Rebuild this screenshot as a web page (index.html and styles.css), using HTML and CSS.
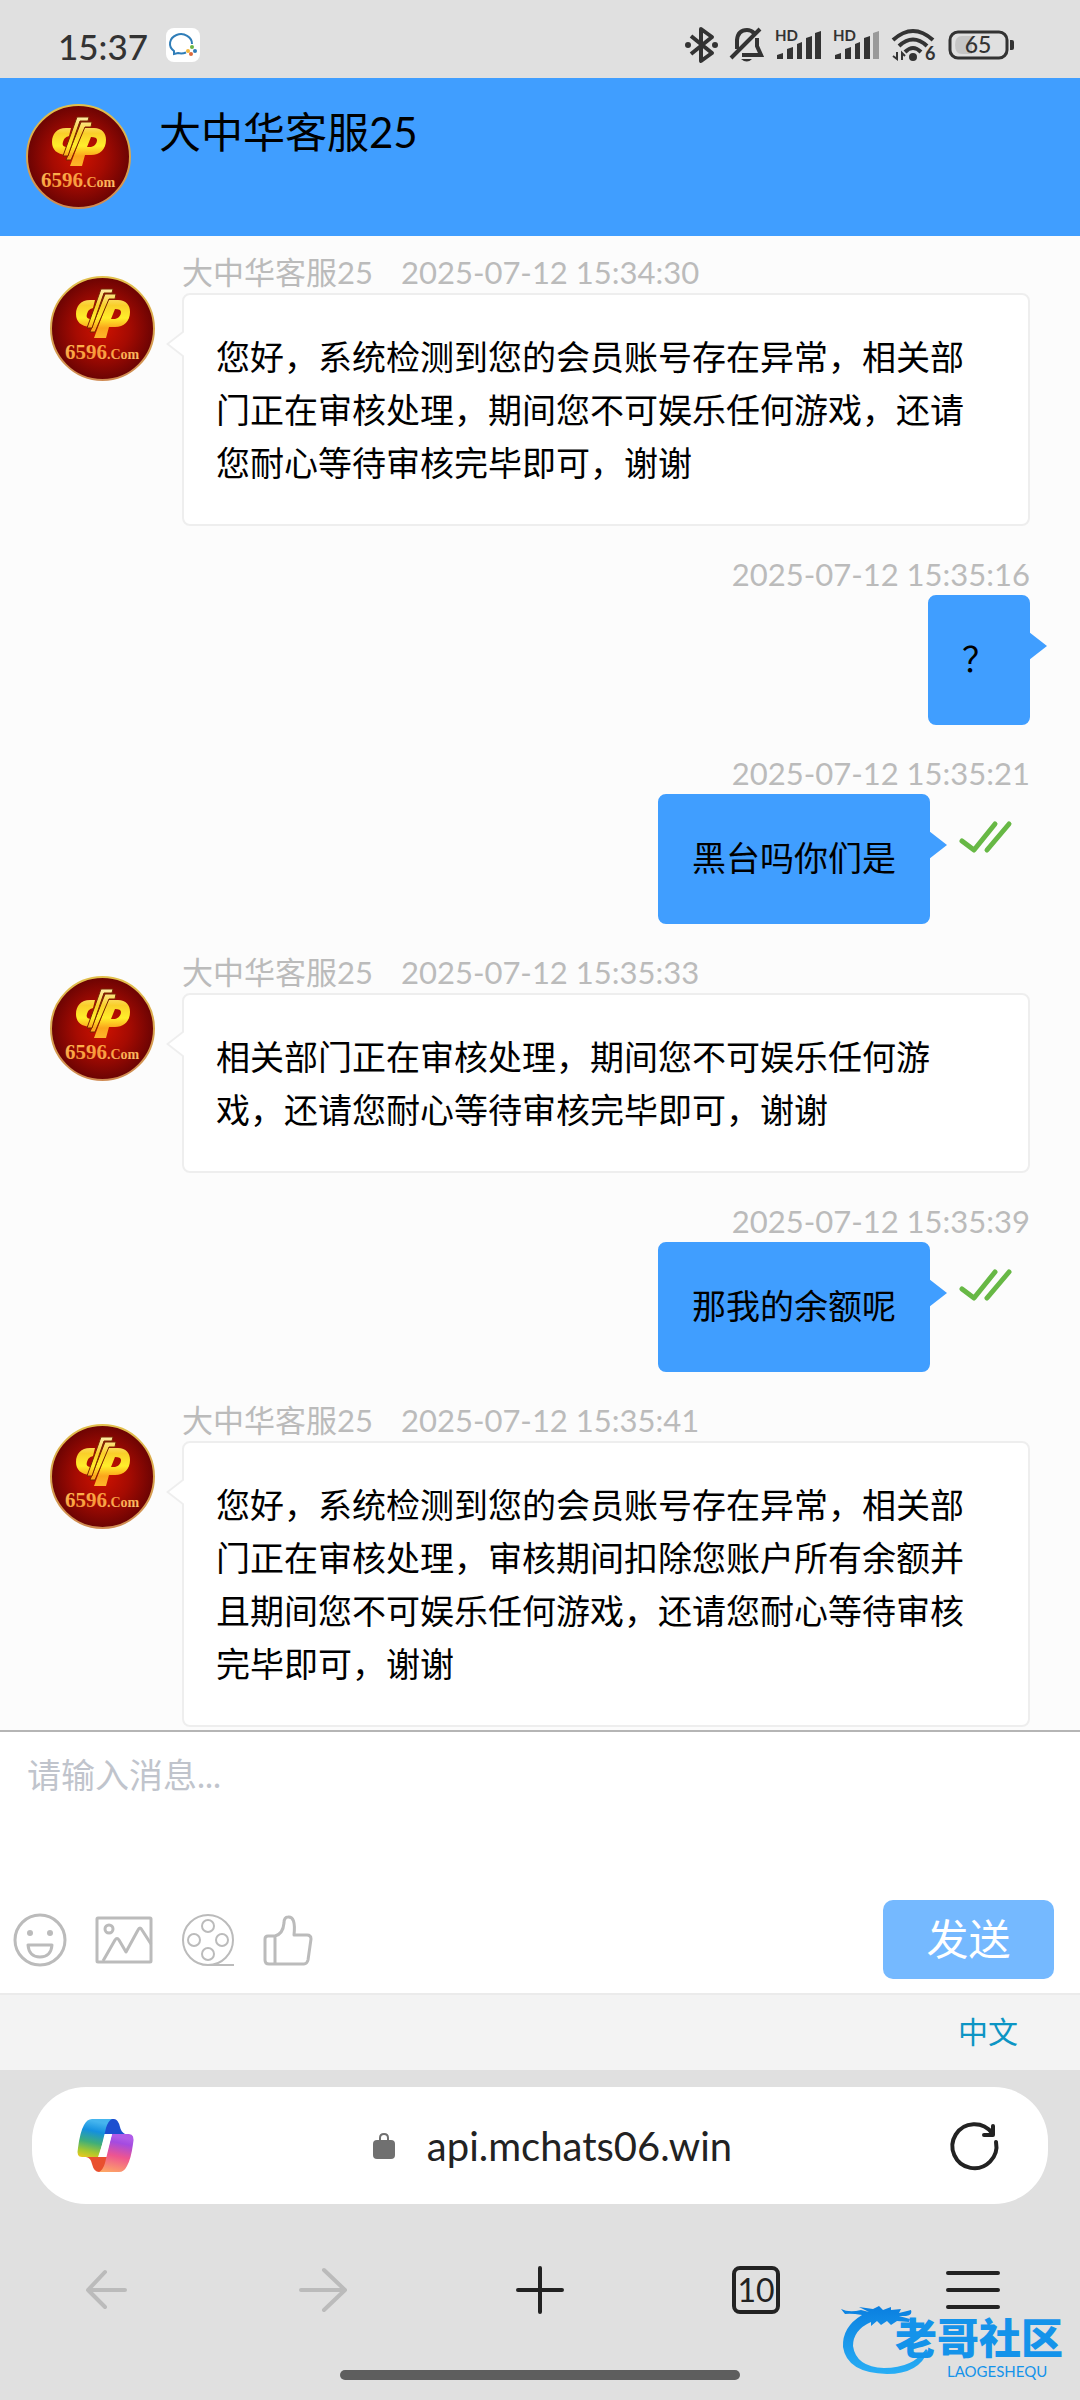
FILE: index.html
```html
<!DOCTYPE html>
<html lang="zh-CN">
<head>
    <meta charset="UTF-8">
    <meta name="viewport" content="width=device-width, initial-scale=1">
    <title>大中华客服25</title>
    <link rel="stylesheet" href="styles.css">
</head>
<body>
    <div class="status_bar">
        <span class="time">15:37</span>
        <svg class="app_badge" width="34" height="34" viewBox="0 0 34 34">
            <rect width="34" height="34" rx="8" fill="#fff"/>
            <path d="M26 16 A11 9.500 0 1 0 8 23 L8 26 L12 25 Q16 26 20 24.500" fill="none" stroke="#2f7db8" stroke-width="2"/>
            <circle cx="22" cy="23" r="2" fill="#f3b53a"/>
            <circle cx="26" cy="19" r="2" fill="#6bb544"/>
            <circle cx="29" cy="23" r="2" fill="#2f7db8"/>
            <circle cx="25" cy="26" r="2" fill="#dd6a3c"/>
        </svg>
        <div class="status_icons">
            <svg width="34" height="36" viewBox="0 0 34 36">
                <path d="M6 9 L27 26 L16 34 V2 L27 10 L6 27" fill="none" stroke="#333" stroke-width="4" stroke-linejoin="round"/>
                <circle cx="3" cy="18" r="3" fill="#333"/>
                <circle cx="30" cy="18" r="3" fill="#333"/>
            </svg>
            <svg width="34" height="36" viewBox="0 0 34 36">
                <path d="M1 31 L30 2 M7 22 V13 Q8 3 17 3 Q21 3 24 6 M27 11 V19 L31 28 H12" fill="none" stroke="#333" stroke-width="4"/>
                <path d="M11 32 H22 Q17 37 11 32 Z" fill="#333"/>
            </svg>
            <svg width="47" height="32" viewBox="0 0 47 32">
                <text x="0" y="12" class="hd" fill="#333">HD</text>
                <path d="M2 26 L8 24 V30 H2 Z M12 20 L18 18 V30 H12 Z M22 15 L27 13 V30 H22 Z M31 9 L37 7 V30 H31 Z M40 4 L46 2 V30 H40 Z" fill="#333"/>
            </svg>
            <svg width="47" height="32" viewBox="0 0 47 32">
                <text x="0" y="12" class="hd" fill="#333">HD</text>
                <path d="M2 26 L8 24 V30 H2 Z M12 20 L18 18 V30 H12 Z M22 15 L27 13 V30 H22 Z M31 9 L37 7 V30 H31 Z" fill="#333"/>
                <path d="M40 4 L46 2 V30 H40 Z" fill="#999"/>
            </svg>
            <svg width="46" height="34" viewBox="0 0 46 34">
                <path d="M2 12 Q22 -6 42 12 M8 18 Q22 5 36 18 M14 24 Q22 16 30 24" fill="none" stroke="#333" stroke-width="4"/>
                <circle cx="22" cy="29" r="4" fill="#333"/>
                <path d="M6 24 V31 L2 28 M11 32 V25 L14 28" fill="none" stroke="#333" stroke-width="2"/>
                <text x="34" y="32" class="wifi_num" fill="#333">6</text>
            </svg>
            <svg width="66" height="30" viewBox="0 0 66 30">
                <path d="M14 6 H24 V24 H14 Q7 24 7 15 Q7 6 14 6 Z" fill="#c6c6c6"/>
                <rect x="2" y="2" width="57" height="26" rx="8" fill="none" stroke="#333" stroke-width="3"/>
                <path d="M62 10 H64 Q66 10 66 12 V18 Q66 20 64 20 H62 Z" fill="#333"/>
                <text x="30" y="23" text-anchor="middle" class="battery_num" fill="#333">65</text>
            </svg>
        </div>
    </div>

    <header class="chat_header">
        <!-- the agent logo, reused beside each message -->
        <svg class="avatar">
            <defs>
                <radialGradient id="red" cx="50%" cy="50%" r="52%">
                    <stop offset="0" stop-color="#cf1200"/>
                    <stop offset="0.5" stop-color="#a50b02"/>
                    <stop offset="1" stop-color="#660303"/>
                </radialGradient>
                <linearGradient id="gold" gradientUnits="userSpaceOnUse" x1="0" y1="12" x2="0" y2="62">
                    <stop offset="0" stop-color="#fdeeb0"/>
                    <stop offset="0.35" stop-color="#f9cf2a"/>
                    <stop offset="0.6" stop-color="#ffee2a"/>
                    <stop offset="0.8" stop-color="#fba51c"/>
                    <stop offset="1" stop-color="#fdb62a"/>
                </linearGradient>
                <linearGradient id="goldText" x1="0" y1="0" x2="1" y2="1">
                    <stop offset="0" stop-color="#ffc35a"/>
                    <stop offset="0.5" stop-color="#f8993a"/>
                    <stop offset="1" stop-color="#ffcf7a"/>
                </linearGradient>
                <linearGradient id="rim" x1="0" y1="0" x2="0" y2="1">
                    <stop offset="0" stop-color="#e2c04c"/>
                    <stop offset="1" stop-color="#cf8a52"/>
                </linearGradient>
            </defs>
            <g id="avatar">
                <circle cx="52.5" cy="52.5" r="51.5" fill="url(#red)" stroke="url(#rim)" stroke-width="2"/>
                <g fill="url(#gold)">
                    <path d="M45 24 H40 C31 24 26 30 26 38 C26 46 31 50 40 51 L42 43 C37 43 36 41 37 38 C38 34 40 33 43 32 Z"/>
                    <path fill-rule="evenodd" d="M58 24 H68 C76 24 80 29 80 36 C80 45 74 51 65 51 H59 L56 62 H44 Z M65 33 L61 43 H65 C69 42 71 39 71 36 C71 34 69 33 65 33 Z"/>
                    <path d="M55 18 H66 L65 23 H59 L45 56 H40 Z" stroke="#7a2400" stroke-width="1"/>
                    <path d="M51 13 H63 L62 17 H54 L42 52 H37 Z" stroke="#7a2400" stroke-width="1"/>
                </g>
                <text x="15" y="83" class="avatar_num" fill="url(#goldText)">6596<tspan class="avatar_com">.Com</tspan></text>
            </g>
        </svg>
        <h1>大中华客服25</h1>
    </header>

    <main class="chat">
        <div class="message">
            <svg class="avatar"><use href="#avatar"/></svg>
            <div class="content">
                <div class="meta"><span>大中华客服25</span><time>2025-07-12 15:34:30</time></div>
                <p class="bubble">您好，系统检测到您的会员账号存在异常，相关部门正在审核处理，期间您不可娱乐任何游戏，还请您耐心等待审核完毕即可，谢谢</p>
            </div>
        </div>

        <div class="message sent">
            <div class="content">
                <div class="meta"><time>2025-07-12 15:35:16</time></div>
                <p class="bubble">？</p>
            </div>
        </div>

        <div class="message sent">
            <div class="content">
                <div class="meta"><time>2025-07-12 15:35:21</time></div>
                <div class="sent_row">
                    <p class="bubble">黑台吗你们是</p>
                    <svg class="checks" viewBox="0 0 52 32"><path d="M2 20 L14 29 L35 3 M27 29 L49 3"/></svg>
                </div>
            </div>
        </div>

        <div class="message">
            <svg class="avatar"><use href="#avatar"/></svg>
            <div class="content">
                <div class="meta"><span>大中华客服25</span><time>2025-07-12 15:35:33</time></div>
                <p class="bubble">相关部门正在审核处理，期间您不可娱乐任何游戏，还请您耐心等待审核完毕即可，谢谢</p>
            </div>
        </div>

        <div class="message sent">
            <div class="content">
                <div class="meta"><time>2025-07-12 15:35:39</time></div>
                <div class="sent_row">
                    <p class="bubble">那我的余额呢</p>
                    <svg class="checks" viewBox="0 0 52 32"><path d="M2 20 L14 29 L35 3 M27 29 L49 3"/></svg>
                </div>
            </div>
        </div>

        <div class="message">
            <svg class="avatar"><use href="#avatar"/></svg>
            <div class="content">
                <div class="meta"><span>大中华客服25</span><time>2025-07-12 15:35:41</time></div>
                <p class="bubble">您好，系统检测到您的会员账号存在异常，相关部门正在审核处理，审核期间扣除您账户所有余额并且期间您不可娱乐任何游戏，还请您耐心等待审核完毕即可，谢谢</p>
            </div>
        </div>
    </main>

    <form class="composer">
        <textarea aria-label="请输入消息" placeholder="请输入消息..."></textarea>
        <div class="tools">
            <button type="button" aria-label="表情">
                <svg width="54" height="54" viewBox="0 0 54 54">
                    <circle cx="27" cy="27" r="25"/>
                    <path d="M15 32 H39 Q38 44 27 44 Q16 44 15 32 Z"/>
                    <circle class="dot" cx="17" cy="20" r="3"/>
                    <circle class="dot" cx="37" cy="20" r="3"/>
                </svg>
            </button>
            <button type="button" aria-label="图片">
                <svg width="58" height="54" viewBox="0 0 58 54">
                    <rect x="2" y="5" width="54" height="44" rx="1"/>
                    <circle cx="14" cy="16" r="4"/>
                    <path d="M8 48 L20 27 Q22 24 24 27 L31 39 L43 17 Q45 13 47 17 L56 31"/>
                </svg>
            </button>
            <button type="button" aria-label="视频">
                <svg class="thin" width="54" height="54" viewBox="0 0 54 54">
                    <circle cx="27" cy="27" r="25"/>
                    <circle cx="27" cy="13" r="6"/>
                    <circle cx="13" cy="27" r="6"/>
                    <circle cx="41" cy="27" r="6"/>
                    <circle cx="27" cy="41" r="6"/>
                    <path d="M27 52 H53"/>
                </svg>
            </button>
            <button type="button" aria-label="评价">
                <svg width="50" height="54" viewBox="0 0 50 54">
                    <path d="M12 23 H5 Q2 23 2 26 V47 Q2 51 6 51 H41 Q44 51 45 47 L48 26 Q48 22 44 22 H31 Q33 3 25 4 Q21 4 21 10 Q20 21 12 23 V51"/>
                </svg>
            </button>
            <button class="send" type="submit">发送</button>
        </div>
    </form>

    <div class="language">
        <a href="#">中文</a>
    </div>

    <footer class="browser">
        <div class="address">
            <button type="button" aria-label="Copilot">
                <svg width="57" height="53" viewBox="0 0 57 53">
                    <defs>
                        <linearGradient id="cool" x1="0.2" y1="0" x2="0" y2="1">
                            <stop offset="0" stop-color="#45b5ee"/>
                            <stop offset="0.25" stop-color="#1490df"/>
                            <stop offset="0.55" stop-color="#3fae7a"/>
                            <stop offset="0.8" stop-color="#a8c82e"/>
                            <stop offset="1" stop-color="#f2c81e"/>
                        </linearGradient>
                        <linearGradient id="warm" x1="0.2" y1="0" x2="0" y2="1">
                            <stop offset="0" stop-color="#b05be8"/>
                            <stop offset="0.15" stop-color="#a44be0"/>
                            <stop offset="0.5" stop-color="#ee5590"/>
                            <stop offset="1" stop-color="#ffad62"/>
                        </linearGradient>
                    </defs>
                    <path d="M27 0 H37 Q41 0 43 8 Q44 13 48 15 H22 Z" fill="#1d4fd0"/>
                    <path d="M30 53 H22 Q17 53 15 45 Q14 39 9 38 H36 Z" fill="#e9502f"/>
                    <path d="M15 0 H35 Q31 2 29 9 L22 38 H5 Q-1 38 1 29 Q3 13 7 6 Q10 0 15 0 Z" fill="url(#cool)"/>
                    <path d="M42 53 H22 Q26 51 28 44 L35 15 H52 Q58 15 56 25 Q54 40 50 47 Q47 53 42 53 Z" fill="url(#warm)"/>
                    <path d="M35 15 Q29 15 27 20 L21 38 Q28 38 30 33 Z" fill="#fff"/>
                </svg>
            </button>
            <button type="button" class="url">
                <svg width="22" height="28" viewBox="0 0 22 28">
                    <rect x="0" y="8" width="22" height="19" rx="4" fill="#707070"/>
                    <path d="M7 9 V6 Q7 2 11 2 Q15 2 15 6 V9" fill="none" stroke="#707070" stroke-width="2"/>
                </svg>
                <span>api.mchats06.win</span>
            </button>
            <button type="button" aria-label="刷新">
                <svg width="48" height="48" viewBox="0 0 48 48" fill="none" stroke="#222" stroke-width="4" stroke-linecap="round" stroke-linejoin="round">
                    <path d="M45 20 A22 22 0 1 1 41 11 M42 4 V13 H33"/>
                </svg>
            </button>
        </div>

        <nav class="browser_nav">
            <button type="button" aria-label="后退" disabled>
                <svg width="48" height="48" viewBox="0 0 48 48"><path d="M41 24 H4 M21 6 L4 24 L21 41"/></svg>
            </button>
            <button type="button" aria-label="前进" disabled>
                <svg width="48" height="48" viewBox="0 0 48 48"><path d="M1 24 H45 M24 4 L45 24 L24 44"/></svg>
            </button>
            <button type="button" aria-label="新建标签页">
                <svg width="48" height="48" viewBox="0 0 48 48"><path d="M2 24 H46 M24 2 V46"/></svg>
            </button>
            <button type="button" class="tabs"><span>10</span></button>
            <button type="button" aria-label="菜单">
                <svg width="54" height="48" viewBox="0 0 54 48"><path d="M3 7 H53 M3 24 H53 M3 41 H53"/></svg>
            </button>
        </nav>
        <div class="home_bar"></div>

        <div class="watermark">
            <svg width="90" height="70" viewBox="0 0 90 70">
                <defs>
                    <linearGradient id="dragon" x1="0" y1="0" x2="0" y2="1">
                        <stop offset="0" stop-color="#0a7fe0"/>
                        <stop offset="1" stop-color="#28aef5"/>
                    </linearGradient>
                </defs>
                <path d="M0 4 Q8 8 20 5 L28 7 L18 2 L32 4 L38 1 L42 5 L50 2 L50 5 L60 4 L58 8 L70 5 Q72 10 65 11 L58 11 L69 14 L68 17 L56 16 L50 20 L46 16 L40 20 L36 16 L30 21 L30 17 Q12 25 12 41 Q15 62 43 63 Q72 63 85 44 L87 46 Q78 69 46 69 Q6 68 2 42 Q1 22 21 10 Q10 8 4 9 Z" fill="url(#dragon)"/>
            </svg>
            <div class="watermark_text">
                <b>老哥社区</b>
                <small>LAOGESHEQU</small>
            </div>
        </div>
    </footer>
</body>
</html>
```
FILE: styles.css
```css
* {
    box-sizing: border-box;
}

body {
    margin: 0;
    min-height: 100vh;
    display: flex;
    flex-direction: column;
    background: #fcfcfc;
    color: #000;
    font-family: Lato, "Noto Sans CJK SC", sans-serif;
    font-size: 34px;
}

button {
    padding: 0;
    border: 0;
    background: none;
    font-family: inherit;
    color: inherit;
}

svg {
    display: block;
    flex-shrink: 0;
    overflow: visible;
}

.avatar {
    width: 105px;
    height: 105px;
}

.avatar_num {
    font: bold 21px "Liberation Serif", serif;
}

.avatar_com {
    font-size: 14px;
}

/* status bar */
.status_bar {
    height: 78px;
    padding: 0 66px 0 58px;
    display: flex;
    align-items: center;
    background: #e0e0e0;
    color: #333;
}

.time {
    font-size: 35px;
    font-weight: 500;
    line-height: 60px;
    padding-top: 14px;
}

.app_badge {
    margin: 12px 0 0 18px;
}

.status_icons {
    margin: 12px 0 0 auto;
    display: flex;
    align-items: center;
    gap: 11px;
}

.hd {
    font: bold 15px Lato, sans-serif;
}

.wifi_num {
    font: bold 18px Lato, sans-serif;
}

.battery_num {
    font: 500 23px Lato, sans-serif;
}

/* header */
.chat_header {
    height: 158px;
    padding: 26px;
    display: flex;
    gap: 28px;
    background: #409eff;
}

.chat_header h1 {
    margin: 0;
    font-size: 42px;
    font-weight: normal;
    line-height: 56px;
}

/* messages */
.chat {
    flex: 1;
    padding: 15px 50px 2px;
    display: flex;
    flex-direction: column;
    gap: 27px;
}

.message {
    display: flex;
    gap: 27px;
}

.message .avatar {
    margin-top: 25px;
}

.content {
    flex: 1;
}

.meta {
    display: flex;
    gap: 28px;
    font-size: 31px;
    line-height: 42px;
    color: #bbb;
}

.bubble {
    position: relative;
    margin: 0;
    min-height: 130px;
    padding: 35px 32px;
    border: 2px solid #eee;
    border-radius: 8px;
    background: #fff;
    line-height: 53px;
}

/* arrow: outline first, fill on top of it */
.bubble::before,
.bubble::after {
    content: "";
    position: absolute;
    right: 100%;
    top: 35px;
    width: 18px;
    height: 28px;
    background: #eee;
    clip-path: polygon(100% 0, 0 50%, 100% 100%);
}

.bubble::after {
    margin-right: -3px;
    background: #fff;
}

.sent .content {
    display: flex;
    flex-direction: column;
    align-items: flex-end;
}

.sent .bubble {
    border-color: #409eff;
    background: #409eff;
}

.sent .bubble::before {
    left: 100%;
    margin-left: 1px;
    background: #409eff;
    clip-path: polygon(0 0, 100% 50%, 0 100%);
}

.sent .bubble::after {
    display: none;
}

.sent_row {
    display: flex;
    gap: 30px;
}

.checks {
    width: 52px;
    height: 32px;
    margin: 27px 18px 0 0;
    fill: none;
    stroke: #67b845;
    stroke-width: 5;
    stroke-linecap: round;
    stroke-linejoin: round;
}

/* composer */
.composer {
    padding: 16px 26px 14px 13px;
    border-top: 2px solid #b5b5b5;
    background: #fff;
}

.composer textarea {
    display: block;
    width: 100%;
    height: 152px;
    padding: 0 14px;
    border: 0;
    outline: 0;
    resize: none;
    background: none;
    font-family: inherit;
    font-size: 34px;
    line-height: 53px;
}

.composer textarea::placeholder {
    color: #c0c4cc;
}

.tools {
    display: flex;
    align-items: center;
    gap: 28px;
}

.tools svg {
    fill: none;
    stroke: #bbb;
    stroke-width: 3;
    stroke-linejoin: round;
}

.tools .thin {
    stroke-width: 2;
}

.tools .dot {
    fill: #bbb;
    stroke: none;
}

.send {
    margin-left: auto;
    width: 171px;
    height: 79px;
    padding-bottom: 6px;
    border-radius: 10px;
    background: #75b9ff;
    color: #fff;
    font-size: 42px;
}

.language {
    height: 77px;
    padding: 0 62px;
    border-top: 2px solid #ebebeb;
    background: #f3f3f3;
    text-align: right;
    line-height: 70px;
}

.language a {
    color: #0c95c4;
    font-size: 30px;
    text-decoration: none;
}

/* browser bars */
.browser {
    position: relative;
    padding: 17px 0 20px;
    background: #e0e0e0;
    color: #222;
}

.address {
    height: 117px;
    margin: 0 32px;
    padding: 0 49px 0 45px;
    display: flex;
    align-items: center;
    justify-content: space-between;
    border-radius: 54px;
    background: #fff;
}

.url {
    margin-left: 20px;
    display: flex;
    align-items: center;
    gap: 32px;
    font-size: 40px;
}

.browser_nav {
    padding: 62px 0 56px;
    display: grid;
    grid-template-columns: repeat(5, 1fr);
    justify-items: center;
}

.browser_nav svg {
    fill: none;
    stroke: #222;
    stroke-width: 4;
    stroke-linecap: round;
    stroke-linejoin: round;
}

.browser_nav button:disabled svg {
    stroke: #bbb;
}

.tabs span {
    display: block;
    width: 48px;
    height: 48px;
    border: 4px solid #222;
    border-radius: 8px;
    font-size: 32px;
    line-height: 40px;
}

.home_bar {
    width: 37%;
    height: 10px;
    margin: 0 auto;
    border-radius: 5px;
    background: #5e5e5e;
}

.watermark {
    position: absolute;
    right: 17px;
    bottom: 19px;
    display: flex;
}

.watermark_text {
    margin: 10px 0 0 -36px;
    display: flex;
    flex-direction: column;
    color: #1493ea;
}

.watermark_text b {
    font-size: 42px;
    font-weight: 900;
    line-height: 46px;
}

.watermark_text small {
    padding-left: 52px;
    font-size: 15px;
    line-height: 20px;
}
```
